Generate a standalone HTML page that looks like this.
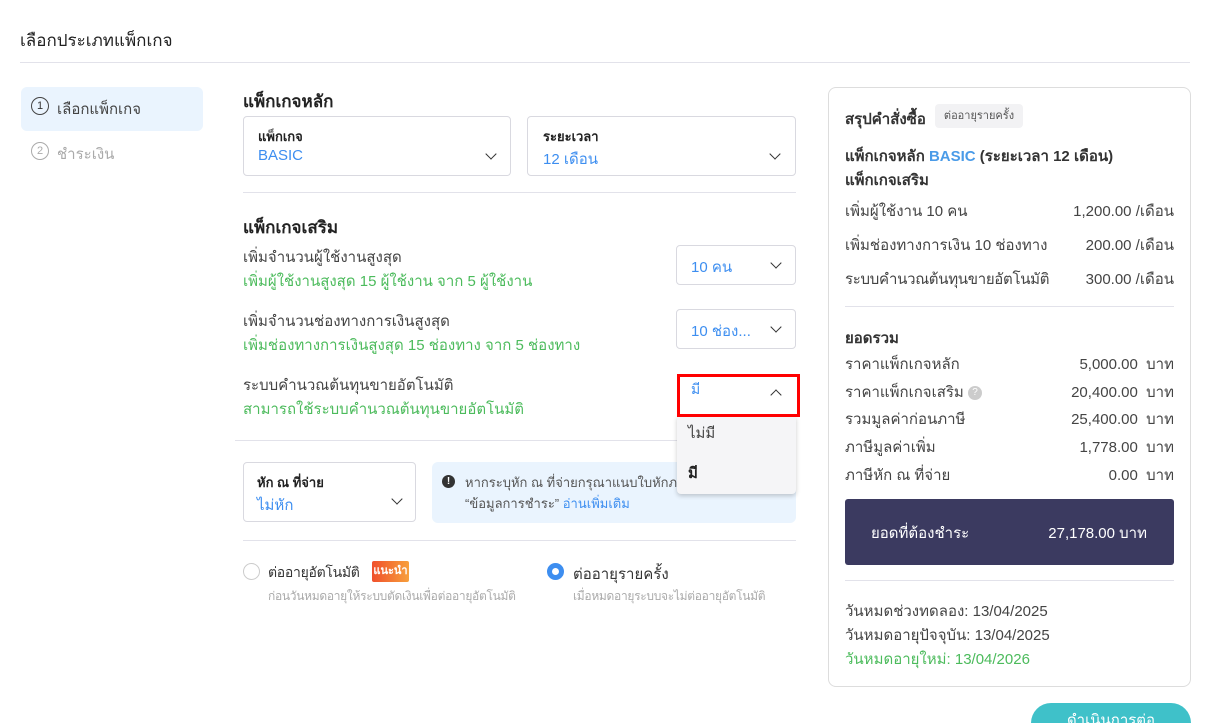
<!DOCTYPE html>
<html><head><meta charset="utf-8"><style>
*{box-sizing:border-box;margin:0;padding:0}
html{width:1215px;height:723px;overflow:hidden}
body{width:1215px;height:723px;overflow:hidden;background:#fff;font-family:"Liberation Sans","Noto Sans CJK SC",sans-serif;color:#333;position:relative}
.a{position:absolute;white-space:nowrap}
.hr{position:absolute;height:1px;background:#e2e2ea}
.box{position:absolute;border:1px solid #d9d9e0;border-radius:4px;background:#fff}
.lbl{font-size:13px;font-weight:bold;color:#222}
.val{font-size:15px;color:#3d8ef0}
.grn{color:#4cbb5c;font-size:15px}
.chev{position:absolute;width:8px;height:8px;border-right:1.6px solid #333;border-bottom:1.6px solid #333;transform:rotate(45deg)}
.r{font-size:15px;color:#444}
.dd{z-index:10}
</style></head><body>
<div class="a" style="left:20px;top:27px;font-size:17px;color:#222">เลือกประเภทแพ็กเกจ</div>
<div class="hr" style="left:20px;top:62px;width:1170px"></div>

<div class="a" style="left:21px;top:87px;width:182px;height:44px;background:#eaf4fe;border-radius:6px"></div>
<div class="a" style="left:31px;top:97px;width:18px;height:18px;border:1.3px solid #444;border-radius:50%;font-size:11px;text-align:center;line-height:16px">1</div>
<div class="a" style="left:57px;top:97px;font-size:15px;color:#444">เลือกแพ็กเกจ</div>
<div class="a" style="left:31px;top:142px;width:18px;height:18px;border:1.3px solid #aaa;border-radius:50%;font-size:11px;text-align:center;line-height:16px;color:#aaa">2</div>
<div class="a" style="left:57px;top:142px;font-size:15px;color:#aaa">ชำระเงิน</div>

<div class="a" style="left:243px;top:88px;font-size:17px;font-weight:bold;color:#222">แพ็กเกจหลัก</div>
<div class="box" style="left:243px;top:116px;width:268px;height:60px"></div>
<div class="a lbl" style="left:258px;top:126px">แพ็กเกจ</div>
<div class="a val" style="left:258px;top:147px">BASIC</div>
<div class="chev" style="left:487px;top:150px"></div>
<div class="box" style="left:527px;top:116px;width:269px;height:60px"></div>
<div class="a lbl" style="left:543px;top:126px">ระยะเวลา</div>
<div class="a val" style="left:543px;top:147px">12 เดือน</div>
<div class="chev" style="left:771px;top:150px"></div>
<div class="hr" style="left:243px;top:192px;width:553px"></div>

<div class="a" style="left:243px;top:214px;font-size:17px;font-weight:bold;color:#222">แพ็กเกจเสริม</div>
<div class="a r" style="left:243px;top:245px">เพิ่มจำนวนผู้ใช้งานสูงสุด</div>
<div class="a grn" style="left:243px;top:269px">เพิ่มผู้ใช้งานสูงสุด 15 ผู้ใช้งาน จาก 5 ผู้ใช้งาน</div>
<div class="box" style="left:676px;top:245px;width:120px;height:40px"></div>
<div class="a val" style="left:691px;top:255px">10 คน</div>
<div class="chev" style="left:772px;top:259px"></div>
<div class="a r" style="left:243px;top:309px">เพิ่มจำนวนช่องทางการเงินสูงสุด</div>
<div class="a grn" style="left:243px;top:333px">เพิ่มช่องทางการเงินสูงสุด 15 ช่องทาง จาก 5 ช่องทาง</div>
<div class="box" style="left:676px;top:309px;width:120px;height:40px"></div>
<div class="a val" style="left:691px;top:319px">10 ช่อง...</div>
<div class="chev" style="left:772px;top:323px"></div>
<div class="a r" style="left:243px;top:373px">ระบบคำนวณต้นทุนขายอัตโนมัติ</div>
<div class="a grn" style="left:243px;top:397px">สามารถใช้ระบบคำนวณต้นทุนขายอัตโนมัติ</div>
<div class="hr" style="left:235px;top:440px;width:561px"></div>
<div class="a dd" style="left:677px;top:416px;width:119px;height:78px;background:#f5f5f7;border-radius:0 0 4px 4px;box-shadow:0 2px 5px rgba(0,0,0,.2)"></div>
<div class="a dd" style="left:688px;top:421px;font-size:15px;color:#444">ไม่มี</div>
<div class="a dd" style="left:688px;top:461px;font-size:15px;color:#222;font-weight:bold">มี</div>
<div class="a dd" style="left:677px;top:374px;width:123px;height:43px;border:3px solid #f00;background:#fff"></div>
<div class="a val dd" style="left:691px;top:379px;font-size:14px">มี</div>
<div class="chev dd" style="left:772px;top:391px;transform:rotate(225deg)"></div>

<div class="box" style="left:243px;top:462px;width:173px;height:60px"></div>
<div class="a lbl" style="left:257px;top:472px">หัก ณ ที่จ่าย</div>
<div class="a val" style="left:257px;top:493px">ไม่หัก</div>
<div class="chev" style="left:393px;top:495px"></div>
<div class="a" style="left:432px;top:462px;width:364px;height:61px;background:#eaf4fe;border-radius:6px"></div>
<div class="a" style="left:442px;top:475px;width:13px;height:13px;border-radius:50%;background:#333;color:#fff;font-size:10px;font-weight:bold;text-align:center;line-height:13px">!</div>
<div class="a" style="left:465px;top:472px;font-size:13px;color:#555">หากระบุหัก ณ ที่จ่ายกรุณาแนบใบหักภาษี</div>
<div class="a" style="left:465px;top:493px;font-size:13px;color:#555">“ข้อมูลการชำระ” <span style="color:#3d8ef0">อ่านเพิ่มเติม</span></div>
<div class="hr" style="left:243px;top:540px;width:553px"></div>

<div class="a" style="left:243px;top:563px;width:17px;height:17px;border:1px solid #ccc;border-radius:50%"></div>
<div class="a" style="left:268px;top:562px;font-size:14px;color:#333;letter-spacing:-0.3px">ต่ออายุอัตโนมัติ</div>
<div class="a" style="left:372px;top:561px;width:37px;height:21px;background:linear-gradient(90deg,#f0502c,#f7a03c);border-radius:2px;color:#fff;font-size:11px;font-weight:bold;text-align:center;line-height:21px">แนะนำ</div>
<div class="a" style="left:268px;top:587px;font-size:12px;color:#aaa;letter-spacing:-0.3px">ก่อนวันหมดอายุให้ระบบตัดเงินเพื่อต่ออายุอัตโนมัติ</div>
<div class="a" style="left:547px;top:563px;width:17px;height:17px;border:5px solid #3d8ef0;border-radius:50%"></div>
<div class="a" style="left:573px;top:562px;font-size:15px;color:#333">ต่ออายุรายครั้ง</div>
<div class="a" style="left:573px;top:587px;font-size:12px;color:#aaa;letter-spacing:-0.3px">เมื่อหมดอายุระบบจะไม่ต่ออายุอัตโนมัติ</div>

<div class="a" style="left:828px;top:87px;width:363px;height:600px;border:1px solid #ddd;border-radius:8px"></div>
<div class="a" style="left:845px;top:107px;font-size:15px;font-weight:bold;color:#333">สรุปคำสั่งซื้อ</div>
<div class="a" style="left:935px;top:104px;width:88px;height:24px;background:#f2f2f4;border-radius:4px;font-size:11px;color:#555;text-align:center;line-height:24px">ต่ออายุรายครั้ง</div>
<div class="a" style="left:845px;top:144px;font-size:15px;font-weight:bold;color:#333">แพ็กเกจหลัก <span style="color:#4a9be8">BASIC</span> (ระยะเวลา 12 เดือน)</div>
<div class="a" style="left:845px;top:168px;font-size:15px;font-weight:bold;color:#333">แพ็กเกจเสริม</div>
<div class="a r" style="left:845px;top:199px">เพิ่มผู้ใช้งาน 10 คน</div><div class="a r" style="right:41px;top:199px">1,200.00 /เดือน</div>
<div class="a r" style="left:845px;top:233px">เพิ่มช่องทางการเงิน 10 ช่องทาง</div><div class="a r" style="right:41px;top:233px">200.00 /เดือน</div>
<div class="a r" style="left:845px;top:267px;letter-spacing:-0.3px">ระบบคำนวณต้นทุนขายอัตโนมัติ</div><div class="a r" style="right:41px;top:267px">300.00 /เดือน</div>
<div class="hr" style="left:845px;top:306px;width:329px"></div>
<div class="a" style="left:845px;top:326px;font-size:15px;font-weight:bold;color:#333">ยอดรวม</div>
<div class="a r" style="left:845px;top:352px">ราคาแพ็กเกจหลัก</div><div class="a r" style="right:41px;top:352px">5,000.00 &nbsp;บาท</div>
<div class="a r" style="left:845px;top:380px">ราคาแพ็กเกจเสริม <span style="display:inline-block;width:14px;height:14px;border-radius:50%;background:#ccc;color:#fff;font-size:10px;text-align:center;line-height:14px;vertical-align:middle">?</span></div><div class="a r" style="right:41px;top:380px">20,400.00 &nbsp;บาท</div>
<div class="a r" style="left:845px;top:407px">รวมมูลค่าก่อนภาษี</div><div class="a r" style="right:41px;top:407px">25,400.00 &nbsp;บาท</div>
<div class="a r" style="left:845px;top:435px">ภาษีมูลค่าเพิ่ม</div><div class="a r" style="right:41px;top:435px">1,778.00 &nbsp;บาท</div>
<div class="a r" style="left:845px;top:463px">ภาษีหัก ณ ที่จ่าย</div><div class="a r" style="right:41px;top:463px">0.00 &nbsp;บาท</div>
<div class="a" style="left:845px;top:499px;width:329px;height:66px;background:#3b3a60;border-radius:3px"></div>
<div class="a" style="left:871px;top:521px;font-size:15px;color:#fff">ยอดที่ต้องชำระ</div>
<div class="a" style="right:68px;top:521px;font-size:15px;color:#fff">27,178.00 บาท</div>
<div class="hr" style="left:845px;top:580px;width:329px"></div>
<div class="a r" style="left:845px;top:599px">วันหมดช่วงทดลอง: 13/04/2025</div>
<div class="a r" style="left:845px;top:623px">วันหมดอายุปัจจุบัน: 13/04/2025</div>
<div class="a" style="left:845px;top:647px;font-size:15px;color:#4cbb5c">วันหมดอายุใหม่: 13/04/2026</div>
<div class="a" style="left:1031px;top:703px;width:160px;height:20px;overflow:hidden;background:#3fc1c9;border-radius:20px 20px 0 0;color:#fff;font-size:15px;text-align:center;line-height:36px">ดำเนินการต่อ</div>
</body></html>
